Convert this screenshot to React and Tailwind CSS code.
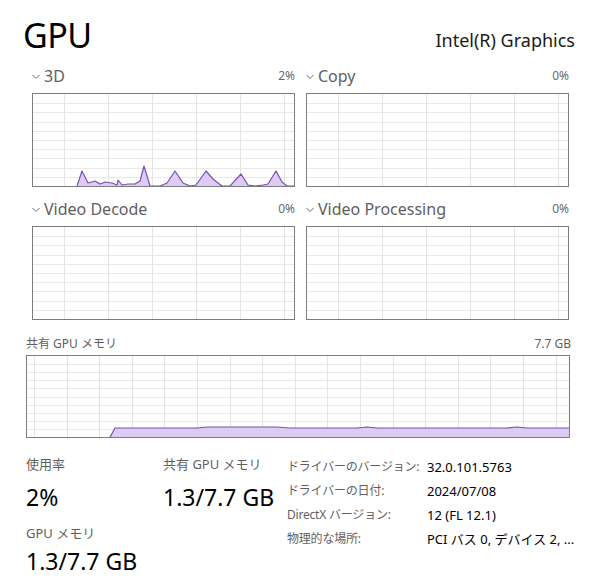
import React from "react";

const spikes = [
  [44, 93], [49, 78], [55, 90], [62, 88], [67, 91], [72, 89], [79, 90], [84, 92], [85, 87], [89, 92],
  [95, 91], [102, 91], [107, 88], [111, 73], [117, 93], [127, 93], [134, 90], [142, 78], [150, 90],
  [157, 93], [163, 92], [173, 78], [180, 86], [185, 90], [189, 93], [197, 93], [208, 81], [215, 92],
  [222, 93], [230, 92], [235, 91], [243, 78], [249, 89], [254, 93], [261, 93],
];

const memLine = [
  [81, 83], [88, 70], [170, 70], [180, 69], [250, 69], [262, 70], [330, 70], [340, 69], [350, 70],
  [480, 70], [490, 69], [500, 70], [543, 70],
];

function Grid({ w, h, cols, colStart, rows, children }) {
  const vx = [];
  for (let x = colStart; x < w; x += cols) vx.push(Math.round(x) + 0.5);
  const hy = [];
  for (let i = 1; i < rows; i++) hy.push(Math.round((h * i) / rows) + 0.5);
  return (
    <svg width={w} height={h} className="block border border-[#7c7c7c] box-content" shapeRendering="crispEdges">
      {hy.map((y) => (
        <line key={"h" + y} x1="0" x2={w} y1={y} y2={y} stroke="#e9e9e9" strokeWidth="1" />
      ))}
      {vx.map((x) => (
        <line key={"v" + x} x1={x} x2={x} y1="0" y2={h} stroke="#e4e4e4" strokeWidth="1" />
      ))}
      {children}
    </svg>
  );
}

function Area({ pts, h }) {
  const line = pts.map((p) => p.join(",")).join(" ");
  const area = `${pts[0][0]},${h} ${line} ${pts[pts.length - 1][0]},${h}`;
  return (
    <g shapeRendering="auto">
      <polygon points={area} fill="#dccbf3" />
      <polyline points={line} fill="none" stroke="#7b4fb3" strokeWidth="1.2" strokeLinejoin="round" />
    </g>
  );
}

function Chevron() {
  return (
    <svg width="8" height="6" viewBox="0 0 8 6" className="mr-[4px] mt-[2px]">
      <path d="M0.5 1 L4 4.5 L7.5 1" fill="none" stroke="#6b6b6b" strokeWidth="1" />
    </svg>
  );
}

function Panel({ title, pct, children }) {
  return (
    <div className="w-[263px]">
      <div className="flex items-center justify-between h-[20px] mb-[7px]">
        <div className="flex items-center text-[16px] text-[#5f5f5f] leading-none">
          <Chevron />
          {title}
        </div>
        <div className="text-[12px] text-[#6a6a6a] leading-none">{pct}</div>
      </div>
      {children || <Grid w={261} h={92} cols={44} colStart={31} rows={10} />}
    </div>
  );
}

const details = [
  ["ドライバーのバージョン:", "32.0.101.5763"],
  ["ドライバーの日付:", "2024/07/08"],
  ["DirectX バージョン:", "12 (FL 12.1)"],
  ["物理的な場所:", "PCI バス 0, デバイス 2, ..."],
];

export default function App() {
  return (
    <div className="w-[593px] h-[580px] bg-white overflow-hidden font-['Noto_Sans','Noto_Sans_CJK_JP',sans-serif] text-black">
      <div className="flex items-end justify-between pl-[23px] pr-[18px] pt-[9px] h-[52px]">
        <div className="text-[34px] leading-none tracking-[-0.5px]">GPU</div>
        <div className="text-[18px] leading-none mb-[3px] text-[#1a1a1a]">Intel(R) Graphics</div>
      </div>

      <div className="pl-[32px] mt-[14px] flex flex-col gap-[12px]">
        <div className="flex gap-[11px]">
          <Panel title="3D" pct="2%">
            <Grid w={261} h={92} cols={44} colStart={31} rows={10}>
              <Area pts={spikes.map(([x, y]) => [x, y - 1])} h={92} />
            </Grid>
          </Panel>
          <Panel title="Copy" pct="0%" />
        </div>
        <div className="flex gap-[11px]">
          <Panel title="Video Decode" pct="0%" />
          <Panel title="Video Processing" pct="0%" />
        </div>
      </div>

      <div className="pl-[26px] pr-[22px] mt-[16px]">
        <div className="flex justify-between items-center h-[16px] mb-[3px] text-[12px] text-[#5f5f5f] leading-none">
          <span>共有 GPU メモリ</span>
          <span>7.7 GB</span>
        </div>
        <Grid w={542} h={81} cols={32.6} colStart={7} rows={10}>
          <Area pts={memLine.map(([x, y]) => [x, y + 2])} h={81} />
        </Grid>
      </div>

      <div className="flex pl-[26px] mt-[17px]">
        <div className="w-[137px] flex flex-col">
          <div className="text-[13px] text-[#5f5f5f] leading-[18px]">使用率</div>
          <div className="text-[23px] leading-[30px] mt-[9px]">2%</div>
          <div className="text-[13px] text-[#5f5f5f] leading-[18px] mt-[12px]">GPU メモリ</div>
          <div className="text-[23px] leading-[30px] mt-[4px]">1.3/7.7 GB</div>
        </div>
        <div className="w-[124px] flex flex-col">
          <div className="text-[13px] text-[#5f5f5f] leading-[18px]">共有 GPU メモリ</div>
          <div className="text-[23px] leading-[30px] mt-[9px]">1.3/7.7 GB</div>
        </div>
        <div className="grid grid-cols-[140px_1fr] auto-rows-[24px] text-[13px] leading-[18px] mt-[3px]">
          {details.map(([k, v]) => (
            <React.Fragment key={k}>
              <div className="text-[#5f5f5f] whitespace-nowrap text-[12px] tracking-[-0.2px]">{k}</div>
              <div className="whitespace-nowrap">{v}</div>
            </React.Fragment>
          ))}
        </div>
      </div>
    </div>
  );
}
